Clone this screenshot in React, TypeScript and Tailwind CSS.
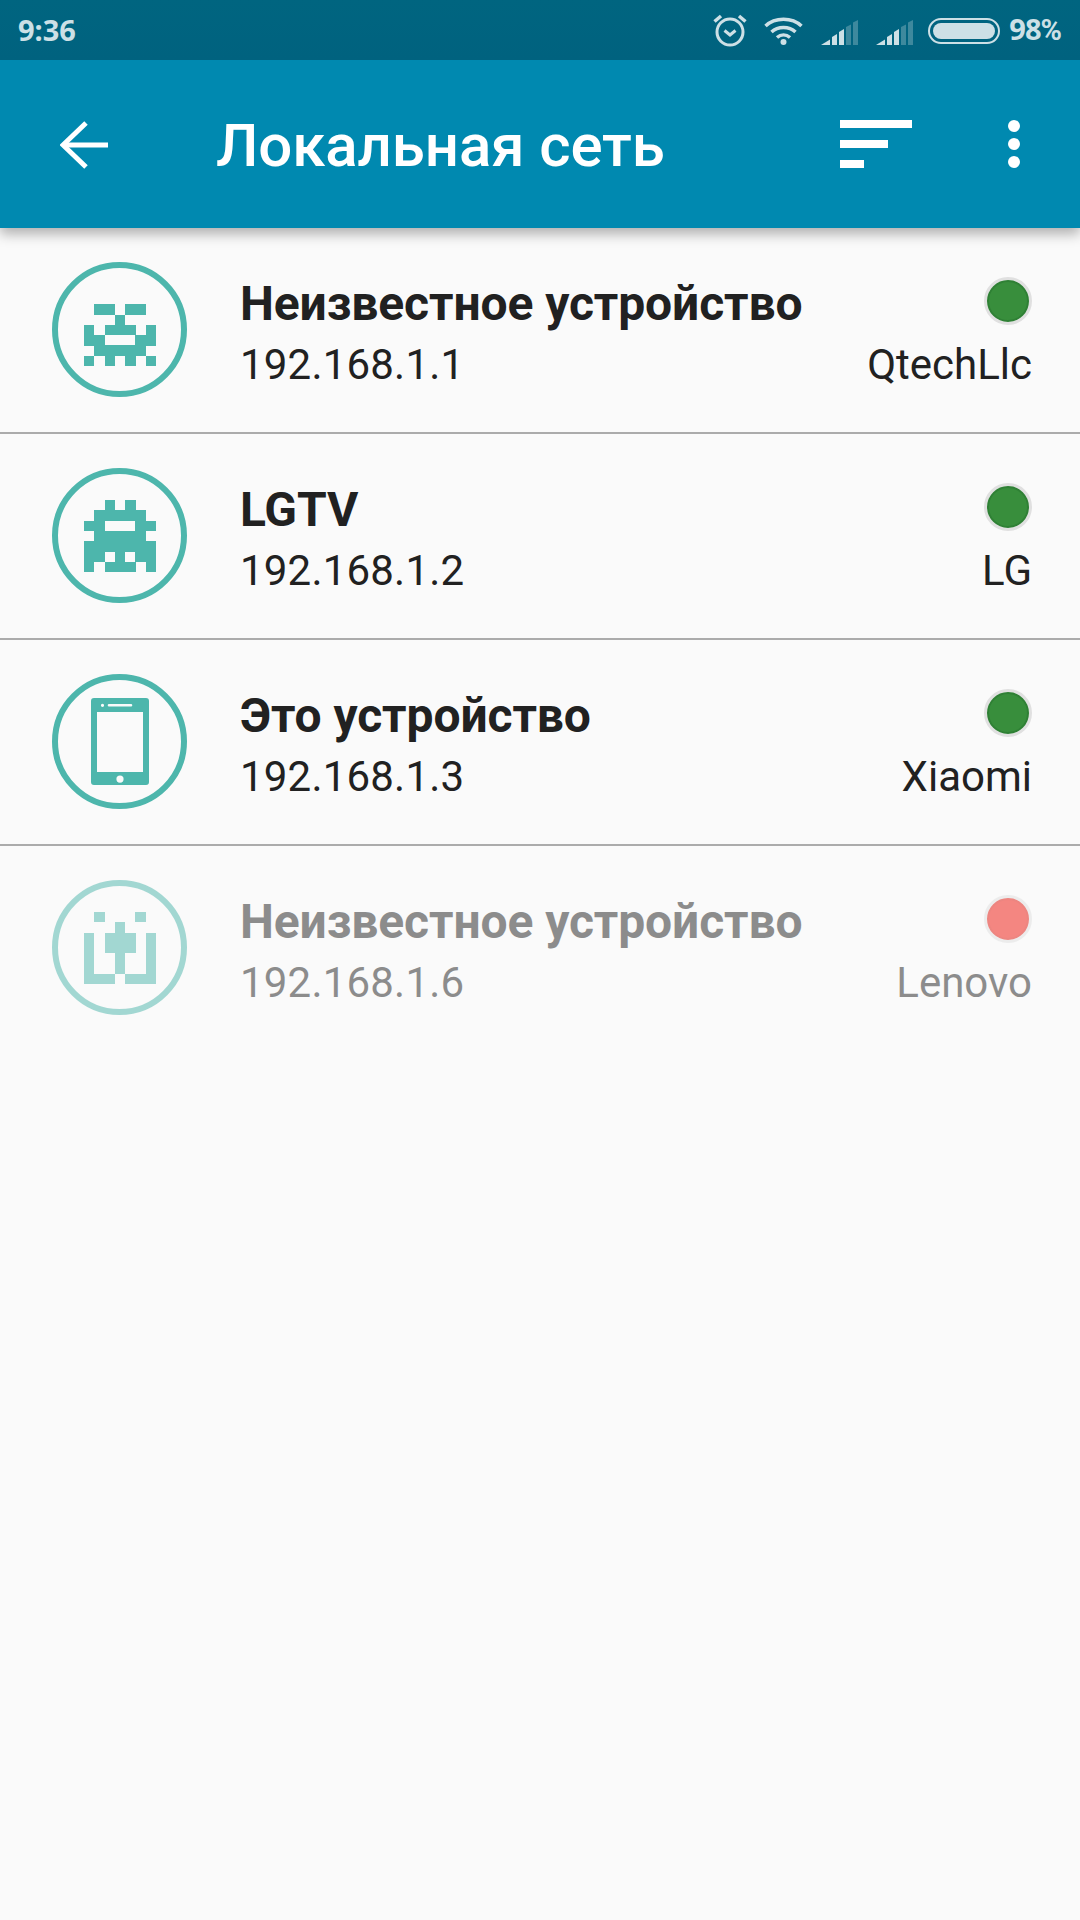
import React from "react";

const TEAL = "#4db6ac";

const pix1 = ["0000000", "0110110", "0001000", "1011101", "1100011", "0111110", "1010101"];
const pix2 = ["0010100", "0111110", "1100011", "0111110", "1111111", "1101011", "1011101"];
const pix4 = ["0100010", "0001000", "1011101", "1011101", "1001001", "1001001", "1110111"];

function Pixels({ rows }: { rows: string[] }) {
  const c = 72 / 7;
  return (
    <svg width="72" height={rows.length * c} viewBox={`0 0 7 ${rows.length}`} shapeRendering="crispEdges">
      {rows.map((r, y) =>
        r.split("").map((v, x) => (v === "1" ? <rect key={`${x}-${y}`} x={x} y={y} width="1.01" height="1.01" fill={TEAL} /> : null))
      )}
    </svg>
  );
}

function Phone() {
  return (
    <svg width="58" height="87" viewBox="0 0 58 87">
      <path
        fillRule="evenodd"
        fill={TEAL}
        d="M3 0H55A3 3 0 0 1 58 3V84A3 3 0 0 1 55 87H3A3 3 0 0 1 0 84V3A3 3 0 0 1 3 0ZM6 14V74H52V14ZM18 6a1.2 1.2 0 0 0 0 2.6H40a1.2 1.2 0 0 0 0-2.6ZM11.500 5.700a1.600 1.600 0 1 0 0 3.200a1.600 1.600 0 1 0 0-3.200ZM29 77.500a3.600 3.600 0 1 0 0 7.200a3.600 3.600 0 1 0 0-7.200Z"
      />
    </svg>
  );
}

function Row({ icon, name, ip, vendor, on, last }: { icon: React.ReactNode; name: string; ip: string; vendor: string; on: boolean; last?: boolean }) {
  return (
    <div className={`h-[206px] shrink-0 ${last ? "" : "border-b-2 border-[#ababab]"}`}>
      <div className={`flex h-[204px] items-center pl-[52px] pr-[48px] ${on ? "" : "opacity-50"}`}>
        <div className="mb-[1px] flex h-[135px] w-[135px] shrink-0 items-center justify-center rounded-full border-[6px] border-[#4db6ac]">{icon}</div>
        <div className="ml-[53px] flex min-w-0 flex-1 flex-col pt-[6px]">
          <div className="text-[48px] font-bold leading-[63px] tracking-[-0.1px] text-[#212121]">{name}</div>
          <div className="text-[42px] leading-[60px] tracking-[0.2px] text-[#212121]">{ip}</div>
        </div>
        <div className="flex flex-col items-end pt-[12px]">
          <div className="h-[48px] w-[48px] rounded-full border-[3px] border-[#e0e0e0]">
            <div className={`h-full w-full rounded-full border-2 ${on ? "border-[#2f8035] bg-[#388e3c]" : "border-[#e0140a] bg-[#f0140a]"}`} />
          </div>
          <div className="mt-[10px] text-[42px] leading-[60px] text-[#212121]">{vendor}</div>
        </div>
      </div>
    </div>
  );
}

function Signal() {
  return (
    <svg width="37" height="25" viewBox="0 0 37 25" fill="#cde0e6">
      <path d="M0 25L9 19.500V25Z" />
      <path d="M11 17L16 14V25H11Z" />
      <path d="M18 12L23 9V25H18Z" />
      <path d="M25 7L30 4.500V25H25Z" opacity="0.3" />
      <path d="M32 2.500L37 0V25H32Z" opacity="0.3" />
    </svg>
  );
}

export default function App() {
  return (
    <div className="flex h-[1920px] w-[1080px] flex-col overflow-hidden bg-[#fafafa]" style={{ fontFamily: "Roboto, sans-serif" }}>
      <div className="relative z-10 shadow-[0_6px_12px_rgba(0,0,0,0.3)]">
        <div className="flex h-[60px] items-center bg-gradient-to-b from-[#006580] to-[#00627f] pl-[18px] pr-[19px] text-[#cde0e6]">
          <span className="text-[29px] font-bold" style={{ fontFamily: "'Noto Sans', sans-serif" }}>9:36</span>
          <div className="ml-auto flex items-center">
            <svg width="34" height="34" viewBox="0 0 34 34" fill="none" stroke="#cde0e6" strokeWidth="3">
              <circle cx="17" cy="19" r="13" />
              <path d="M11.500 17.500L17 22L22.500 17.500" />
              <path d="M1.500 8.500L8 3M32.500 8.500L26 3" strokeWidth="3.500" />
            </svg>
            <svg className="ml-[17px]" width="39" height="30" viewBox="0 0 39 30" fill="none" stroke="#cde0e6" strokeWidth="3.500">
              <path d="M1.500 11C11 2 28 2 37.500 11" />
              <path d="M7.500 17C14 11 25 11 31.500 17" />
              <path d="M13 22.500C17 19 22 19 26 22.500" />
              <circle cx="19.500" cy="27" r="3" fill="#cde0e6" stroke="none" />
            </svg>
            <div className="ml-[18px] mt-[5px] flex">
              <Signal />
              <div className="ml-[18px]"><Signal /></div>
            </div>
            <div className="ml-[15px] mt-[1px] flex h-[26px] w-[72px] items-center rounded-full border-2 border-[#cde0e6] p-[3px]">
              <div className="h-full w-full rounded-full bg-[#cde0e6]" />
            </div>
            <span className="ml-[9px] text-[29px] font-bold tracking-[-1px]" style={{ fontFamily: "'Noto Sans', sans-serif" }}>
              98<span style={{ fontFamily: "Roboto, sans-serif" }}>%</span>
            </span>
          </div>
        </div>
        <div className="relative flex h-[168px] items-center bg-[#0089b0]">
          <svg className="ml-[60px] mt-[1px]" width="48" height="48" viewBox="0 0 48 48" fill="none" stroke="#fff" strokeWidth="5">
            <path d="M48 24H3" />
            <path d="M26 2L3 24L26 46" strokeWidth="5" />
          </svg>
          <div className="ml-[108px] mt-[4px] text-[60px] font-medium leading-none tracking-[-0.1px] text-white">Локальная сеть</div>
          <div className="ml-auto mr-[168px] flex flex-col gap-[12px]">
            <div className="h-[8px] w-[72px] bg-white" />
            <div className="h-[8px] w-[48px] bg-white" />
            <div className="h-[8px] w-[24px] bg-white" />
          </div>
          <div className="absolute right-[60px] top-[60px] flex flex-col gap-[6px]">
            <div className="h-[12px] w-[12px] rounded-full bg-white" />
            <div className="h-[12px] w-[12px] rounded-full bg-white" />
            <div className="h-[12px] w-[12px] rounded-full bg-white" />
          </div>
        </div>
      </div>
      <Row icon={<Pixels rows={pix1} />} name="Неизвестное устройство" ip="192.168.1.1" vendor="QtechLlc" on />
      <Row icon={<Pixels rows={pix2} />} name="LGTV" ip="192.168.1.2" vendor="LG" on />
      <Row icon={<Phone />} name="Это устройство" ip="192.168.1.3" vendor="Xiaomi" on />
      <Row icon={<Pixels rows={pix4} />} name="Неизвестное устройство" ip="192.168.1.6" vendor="Lenovo" on={false} last />
    </div>
  );
}
